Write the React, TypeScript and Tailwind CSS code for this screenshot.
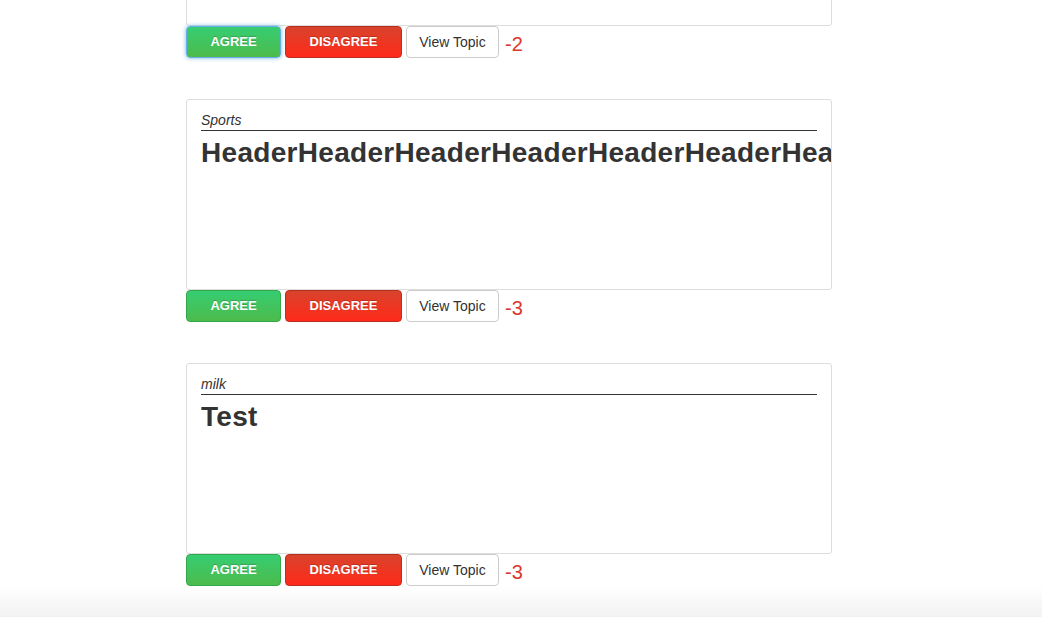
import React from "react";

type Item = { category: string; title: string; score: string; focused?: boolean; top?: boolean };

const items: Item[] = [
  { category: "", title: "", score: "-2", focused: true, top: true },
  { category: "Sports", title: "HeaderHeaderHeaderHeaderHeaderHeaderHeaderHeaderHeader", score: "-3" },
  { category: "milk", title: "Test", score: "-3" },
];

function Topic({ item }: { item: Item }) {
  return (
    <div className={item.top ? "mt-[-165px] mb-[41px]" : "mb-[41px]"}>
      <div className="w-[646px] h-[191px] border border-[#dddddd] rounded-[3px] bg-white overflow-hidden px-[14px] pt-[10px]">
        {item.category !== "" && (
          <>
            <div className="border-b border-[#333333] text-[14px] leading-[20px] italic text-[#333333] whitespace-nowrap">
              {item.category}
            </div>
            <div className="mt-[6px] text-[28px] leading-[32px] font-bold tracking-[0.3px] text-[#333333] whitespace-nowrap">
              {item.title}
            </div>
          </>
        )}
      </div>
      <div className="flex items-center h-[32px]">
        <button
          className={
            "w-[95px] h-[32px] rounded-[4px] border text-[13px] font-bold text-white uppercase bg-[linear-gradient(to_bottom,#36cd73,#4dbb4b)] [text-shadow:0_-1px_0_rgba(0,0,0,0.2)] " +
            (item.focused
              ? "border-[#66afe9] shadow-[0_0_4px_rgba(102,175,233,0.9)]"
              : "border-[#34a84a]")
          }
        >
          AGREE
        </button>
        <button className="ml-[4px] w-[117px] h-[32px] rounded-[4px] border border-[#b9301f] text-[13px] font-bold text-white uppercase bg-[linear-gradient(to_bottom,#d8432c,#ff2a1a)] [text-shadow:0_-1px_0_rgba(0,0,0,0.2)]">
          DISAGREE
        </button>
        <button className="ml-[4px] w-[93px] h-[32px] rounded-[4px] border border-[#cccccc] bg-white text-[14px] text-[#333333]">
          View Topic
        </button>
        <span className="ml-[6px] mt-[3px] text-[20px] text-[#d9382c]">{item.score}</span>
      </div>
    </div>
  );
}

export default function App() {
  return (
    <div
      className="w-[1042px] h-[617px] overflow-hidden bg-[linear-gradient(to_bottom,#ffffff_0,#ffffff_586px,#f2f2f2_617px)]"
      style={{ fontFamily: '"Liberation Sans", Arial, sans-serif' }}
    >
      <div className="pl-[186px]">
        {items.map((it, i) => (
          <Topic key={i} item={it} />
        ))}
      </div>
    </div>
  );
}
